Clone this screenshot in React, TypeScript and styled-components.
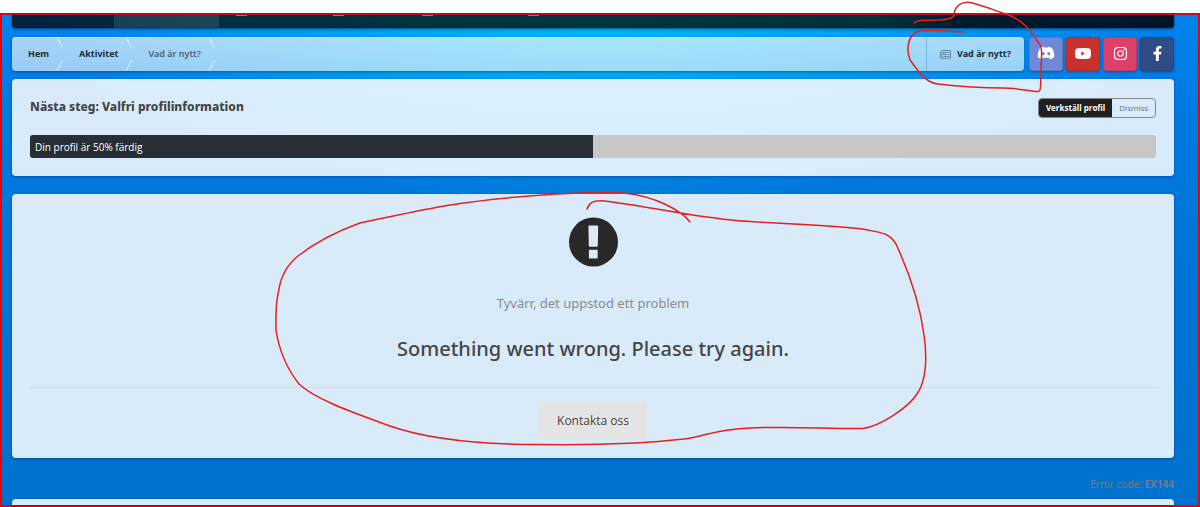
import React from 'react';
import styled, { createGlobalStyle } from 'styled-components';
import { FaDiscord, FaInstagram, FaFacebookF } from 'react-icons/fa';

const GlobalStyle = createGlobalStyle`
  *, *::before, *::after { box-sizing: border-box; }
  body { margin: 0; background: #fff; font-family: 'Noto Sans', 'Open Sans', sans-serif; color: #454545; }
  h1, h2, p, ol { margin: 0; padding: 0; }
  a { color: inherit; text-decoration: none; }
  button { font-family: inherit; cursor: pointer; }
`;

const Page = styled.div`
  position: relative;
  padding-top: 13px;
  overflow: hidden;
`;

const Frame = styled.div`
  border: 2px solid #f00000;
  border-top-color: #b8141c;
  padding: 0 24px 0 10px;
  background:
    radial-gradient(ellipse 46% 190px at 50% 0, rgba(0, 190, 246, 0.95) 0%, rgba(0, 176, 244, 0.75) 40%, rgba(0, 140, 240, 0) 100%),
    linear-gradient(180deg, #0083ee 0, #007ae2 100px, #0075d6 240px, #0072ce 100%);
`;

const TopNav = styled.nav`
  display: flex;
  height: 13px;
  border-radius: 0 0 4px 4px;
  overflow: hidden;
  background: linear-gradient(90deg, #00213f 0, #002f40 18%, #003540 50%, #00303d 75%, #001a2e 82%, #001428 100%);
  box-shadow: 0 1px 3px rgba(0, 20, 50, 0.6), inset 0 -1px 0 rgba(0, 0, 0, 0.4);
`;

const TopTab = styled.span<{ $width: number; $active?: boolean }>`
  width: ${p => p.$width}px;
  background: ${p => (p.$active ? 'rgba(255, 255, 255, 0.11)' : 'transparent')};
`;

const TabMark = styled.span<{ $gap: number }>`
  width: 11px;
  height: 1px;
  margin-left: ${p => p.$gap}px;
  background: #6e868f;
`;

const BarRow = styled.div`
  display: flex;
  gap: 5px;
  margin-top: 9px;
`;

const Crumbs = styled.div`
  display: flex;
  flex: 1;
  justify-content: space-between;
  height: 34px;
  border-radius: 4px;
  background: linear-gradient(180deg, rgba(255, 255, 255, 0.66), rgba(255, 255, 255, 0.6));
  box-shadow: 0 1px 3px rgba(0, 30, 90, 0.45), inset 0 1px 0 rgba(255, 255, 255, 0.35);
  font-size: 9px;
  line-height: 34px;
  color: #222b33;
`;

const CrumbList = styled.ol`
  display: flex;
  list-style: none;
  padding-left: 16px;
`;

const Crumb = styled.li<{ $current?: boolean }>`
  display: flex;
  gap: 7px;
  padding-right: 15px;
  font-weight: ${p => (p.$current ? 600 : 700)};
  color: ${p => (p.$current ? '#4c626e' : '#222b33')};
`;

const WhatsNew = styled.a`
  display: flex;
  align-items: center;
  gap: 6px;
  padding: 0 13px;
  border-left: 1px solid rgba(0, 60, 110, 0.22);
  font-weight: 700;
`;

const Socials = styled.div`
  display: flex;
  gap: 3px;
`;

const Social = styled.a<{ $color: string }>`
  display: flex;
  align-items: center;
  justify-content: center;
  width: 34px;
  height: 34px;
  padding-bottom: 2px;
  border-radius: 4px;
  background: ${p => p.$color};
  color: #fff;
  box-shadow: 0 1px 3px rgba(0, 20, 70, 0.4), inset 0 0 0 1px rgba(0, 0, 0, 0.1);
`;

const Panel = styled.section`
  border-radius: 4px;
  background: rgba(255, 255, 255, 0.85);
  box-shadow: 0 1px 3px rgba(0, 30, 90, 0.45);
`;

const ProfilePanel = styled(Panel)`
  margin-top: 8px;
  padding: 19px 18px 18px;
`;

const ProfileHead = styled.div`
  display: flex;
  justify-content: space-between;
  align-items: flex-start;
  height: 37px;
`;

const ProfileTitle = styled.h2`
  font-size: 12px;
  line-height: 18px;
  font-weight: 800;
`;

const ButtonPair = styled.div`
  display: flex;
  height: 20px;
  border: 1px solid #808488;
  border-radius: 4px;
  overflow: hidden;
`;

const SmallButton = styled.button<{ $dark?: boolean }>`
  border: 0;
  padding: 0 7px;
  font-family: 'Open Sans', sans-serif;
  font-size: 8px;
  line-height: 18px;
  font-weight: ${p => (p.$dark ? 700 : 400)};
  background: ${p => (p.$dark ? '#202020' : 'transparent')};
  color: ${p => (p.$dark ? '#fff' : '#6c7379')};
`;

const Track = styled.div`
  height: 23px;
  border-radius: 3px;
  overflow: hidden;
  background: #c7c7c7;
`;

const Fill = styled.div`
  height: 100%;
  padding-left: 5px;
  background: #282e36;
  color: #fff;
  font-family: 'Open Sans', sans-serif;
  font-size: 10px;
  line-height: 24px;
`;

const ErrorPanel = styled(Panel)`
  display: flex;
  flex-direction: column;
  align-items: center;
  margin-top: 18px;
  padding: 23px 18px 18px;
`;

const Apology = styled.p`
  margin-top: 26px;
  font-size: 13px;
  line-height: 20px;
  color: #8a8c8e;
`;

const ErrorTitle = styled.h1`
  margin-top: 20px;
  font-size: 20px;
  line-height: 32px;
  font-weight: 500;
`;

const Actions = styled.div`
  display: flex;
  justify-content: center;
  align-self: stretch;
  margin-top: 22px;
  padding-top: 13px;
  border-top: 1px solid #cbdbe8;
`;

const ContactButton = styled.button`
  height: 39px;
  padding: 0 18px;
  border: 0;
  border-radius: 4px;
  background: #e4e4e4;
  color: #444;
  font-family: 'Open Sans', sans-serif;
  font-size: 12px;
`;

const ErrorCode = styled.p`
  padding: 18px 0 7px;
  font-size: 10px;
  line-height: 16px;
  text-align: right;
  color: #757c84;
`;

const NextPanel = styled(Panel)`
  height: 6px;
  border-radius: 4px 4px 0 0;
`;

const Ink = styled.svg`
  position: absolute;
  top: 0;
  left: 0;
  pointer-events: none;
`;

const Chevron = () => (
  <svg width="8" height="34" viewBox="0 0 8 34" fill="none" stroke="#fff" strokeOpacity="0.75" aria-hidden="true">
    <path d="M1 0.500L6.500 10.500M6.500 23.500L1 33.500" />
  </svg>
);

const NewsIcon = () => (
  <svg width="11" height="9" viewBox="0 0 11 9" fill="none" stroke="#587b90" strokeWidth="0.800" aria-hidden="true">
    <path d="M2 .5H10.500V8.300H1.300Q.5 8.300 .5 7.500V1.800H2V7.300Q2 8.300 1.300 8.300M3.600 2.300H6V4.700H3.600ZM7.200 2.400H9.400M7.200 4.500H9.400M3.400 6.500H9.400" />
  </svg>
);

const YoutubeIcon = () => (
  <svg width="16" height="11" viewBox="0 0 16 11" aria-hidden="true">
    <path fill="#fff" fillRule="evenodd" d="M2.500 .2Q8-.2 13.500 .2Q15.600 .4 15.800 2.400Q16.100 5.500 15.800 8.600Q15.600 10.600 13.500 10.800Q8 11.200 2.500 10.800Q.4 10.600 .2 8.600Q-.1 5.500 .2 2.400Q.4 .4 2.500 .2ZM6.300 3.400V7.600L10 5.500Z" />
  </svg>
);

const AlertIcon = () => (
  <svg width="50" height="50" viewBox="0 0 50 50" aria-hidden="true">
    <path
      fill="#282828"
      fillRule="evenodd"
      d="M25.500 .5A24.500 24.500 0 1 1 25.500 49.500A24.500 24.500 0 1 1 25.500 .5ZM21.200 8.500Q20.400 8.500 20.400 9.300L20.800 29Q20.900 29.800 21.700 29.800H28.900Q29.700 29.800 29.800 29L30.200 9.300Q30.200 8.500 29.400 8.500ZM21.700 32.800Q20.900 32.800 20.900 33.600V40.700Q20.900 41.500 21.700 41.500H28.900Q29.700 41.500 29.700 40.700V33.600Q29.700 32.800 28.900 32.800Z"
    />
  </svg>
);

export default function App() {
  return (
    <Page>
      <GlobalStyle />
      <Frame>
        <TopNav>
          <TopTab $width={102} />
          <TopTab $width={105} $active />
          <TabMark $gap={17} />
          <TabMark $gap={86} />
          <TabMark $gap={78} />
          <TabMark $gap={95} />
        </TopNav>

        <BarRow>
          <Crumbs>
            <CrumbList>
              <Crumb><a href="#hem">Hem</a><Chevron /></Crumb>
              <Crumb><a href="#aktivitet">Aktivitet</a><Chevron /></Crumb>
              <Crumb $current>Vad är nytt?<Chevron /></Crumb>
            </CrumbList>
            <WhatsNew href="#nytt"><NewsIcon />Vad är nytt?</WhatsNew>
          </Crumbs>
          <Socials>
            <Social href="#discord" aria-label="Discord" $color="#7088d8"><FaDiscord size={18} /></Social>
            <Social href="#youtube" aria-label="YouTube" $color="#cb312c"><YoutubeIcon /></Social>
            <Social href="#instagram" aria-label="Instagram" $color="#de4069"><FaInstagram size={15} /></Social>
            <Social href="#facebook" aria-label="Facebook" $color="#304c86"><FaFacebookF size={15} /></Social>
          </Socials>
        </BarRow>

        <ProfilePanel>
          <ProfileHead>
            <ProfileTitle>Nästa steg: Valfri profilinformation</ProfileTitle>
            <ButtonPair>
              <SmallButton $dark>Verkställ profil</SmallButton>
              <SmallButton>Dismiss</SmallButton>
            </ButtonPair>
          </ProfileHead>
          <Track>
            <Fill style={{ width: '50%' }}>Din profil är 50% färdig</Fill>
          </Track>
        </ProfilePanel>

        <ErrorPanel>
          <AlertIcon />
          <Apology>Tyvärr, det uppstod ett problem</Apology>
          <ErrorTitle>Something went wrong. Please try again.</ErrorTitle>
          <Actions>
            <ContactButton>Kontakta oss</ContactButton>
          </Actions>
        </ErrorPanel>

        <ErrorCode>Error code: <strong>EX144</strong></ErrorCode>
        <NextPanel />
      </Frame>

      <Ink width="1200" height="507" viewBox="0 0 1200 507" fill="none" stroke="#e5201f" strokeWidth="1.500" strokeLinecap="round" strokeLinejoin="round" aria-hidden="true">
        <path d="M914 23C917 19 927 21 939 20C948 19 954 19 954 14C955 6 962 1 970 2.500C982 5 996 11 1006 14C1020 19 1029 27 1038 42C1042 46 1042 51 1041.500 57L1040.500 88Q1040 92 1036 91.500C1025 90 1013 88 1003 88C978 88 955 86 938 84C925 83 917 69 910 60C906 49 908 37 916 32C925 29 945 31 963 32" />
        <path d="M690 222C682 211 655 196 624 193C580 191 500 197 450 205C420 210 385 218 360 223C335 232 312 245 298 256C286 266 281 276 279 289C275 305 276 320 276 330C279 350 288 370 299 384C316 400 355 413 390 426C430 440 480 444.500 540 444.500C580 445 640 444 684 439C705 436 718 429 750 428C790 426 830 429 863 428.500C880 426 908 408 917 394C927 380 927 355 924 335C920 305 908 270 896 244C890 234 884 233 868 230C830 224 760 224 722 219C685 215 640 205 604 201C593 200 589 203 587 209" />
      </Ink>
    </Page>
  );
}
